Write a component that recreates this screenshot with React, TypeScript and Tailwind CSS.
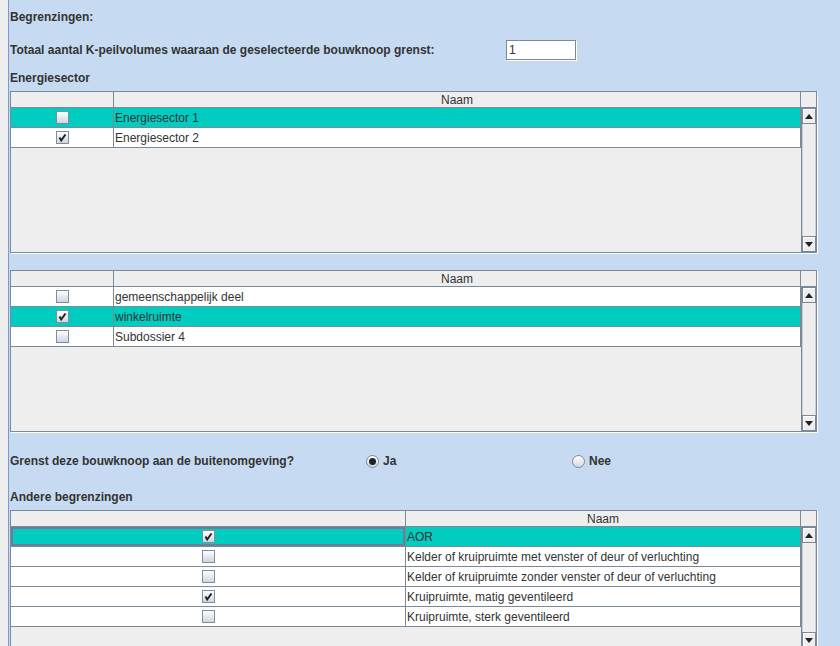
import type { ReactNode } from "react";

type Row = { label: string; checked: boolean; selected?: boolean };

const energie: Row[] = [
  { label: "Energiesector 1", checked: false, selected: true },
  { label: "Energiesector 2", checked: true },
];

const subdossiers: Row[] = [
  { label: "gemeenschappelijk deel", checked: false },
  { label: "winkelruimte", checked: true, selected: true },
  { label: "Subdossier 4", checked: false },
];

const andere: Row[] = [
  { label: "AOR", checked: true, selected: true },
  { label: "Kelder of kruipruimte met venster of deur of verluchting", checked: false },
  { label: "Kelder of kruipruimte zonder venster of deur of verluchting", checked: false },
  { label: "Kruipruimte, matig geventileerd", checked: true },
  { label: "Kruipruimte, sterk geventileerd", checked: false },
];

function CheckBox({ checked }: { checked: boolean }) {
  return (
    <span className="flex h-[13px] w-[13px] items-center justify-center border border-[#7f8d9c] bg-gradient-to-b from-white to-[#cdd6e2]">
      {checked && (
        <svg width="11" height="11" viewBox="0 0 11 11">
          <path d="M2.5 5.5 L4.2 8.5 L8.5 2.5" fill="none" stroke="#222" strokeWidth="2" />
        </svg>
      )}
    </span>
  );
}

function Radio({ checked }: { checked: boolean }) {
  return (
    <span className="flex h-[13px] w-[13px] items-center justify-center rounded-full border border-[#7a8a99] bg-gradient-to-b from-white to-[#d0d9e4]">
      {checked && <span className="h-[7px] w-[7px] rounded-full bg-[#222]" />}
    </span>
  );
}

function Arrow({ up }: { up: boolean }) {
  return (
    <div className="flex h-[16px] items-center justify-center border border-[#7a8a99] bg-[#eeeeee] shadow-[inset_1px_1px_0_white]">
      <svg width="8" height="5" viewBox="0 0 8 5">
        <path d={up ? "M0 5 L4 0 L8 5 Z" : "M0 0 L8 0 L4 5 Z"} fill="#222" />
      </svg>
    </div>
  );
}

function Cell({ className, children }: { className: string; children: ReactNode }) {
  return <div className={`flex h-full items-center ${className}`}>{children}</div>;
}

function Table({
  rows,
  col1,
  col2,
  height,
  focusFirst,
}: {
  rows: Row[];
  col1: string;
  col2: string;
  height: string;
  focusFirst?: boolean;
}) {
  return (
    <div className={`flex w-[807px] flex-col border border-[#7a8a99] bg-[#eeeeee] shadow-[1px_1px_0_white] ${height}`}>
      <div className="flex h-[16px] shrink-0 border-b border-[#7a8a99] bg-[#eeeeee]">
        <div className={`${col1} border-r border-[#7a8a99]`} />
        <div className={`${col2} border-r border-[#7a8a99] pt-px text-center leading-[15px]`}>Naam</div>
        <div className="flex-1" />
      </div>
      <div className="flex min-h-0 flex-1">
        <div className="w-[790px]">
          {rows.map((r, i) => (
            <div
              key={r.label}
              className={`flex h-[20px] border-b border-r border-[#7a8a99] ${r.selected ? "bg-[#00ccc0]" : "bg-white"}`}
            >
              <Cell
                className={`${col1} justify-center border-r border-[#7a8a99] ${
                  focusFirst && i === 0 ? "shadow-[inset_0_0_0_2px_#6a7f98]" : ""
                }`}
              >
                <CheckBox checked={r.checked} />
              </Cell>
              <Cell className="flex-1 pl-px">{r.label}</Cell>
            </div>
          ))}
        </div>
        <div className="flex w-[15px] flex-col border-l border-[#7a8a99]">
          <Arrow up />
          <div className="flex-1 border-x border-[#c8cfd8] bg-[#eeeeee]" />
          <Arrow up={false} />
        </div>
      </div>
    </div>
  );
}

export default function App() {
  return (
    <div className="flex h-[646px] w-[840px] overflow-hidden font-['Liberation_Sans',Arial,sans-serif] text-[12px] text-[#333333]">
      <div className="w-[9px] shrink-0 border-r border-[#7b9bd0] bg-[#eeeeee]" />
      <div className="flex flex-1 flex-col bg-[#c6dbf1] pl-px pt-[10px]">
        <div className="h-[15px] font-bold leading-[15px]">Begrenzingen:</div>

        <div className="mt-[15px] flex h-[20px] items-center">
          <span className="w-[496px] font-bold">Totaal aantal K-peilvolumes waaraan de geselecteerde bouwknoop grenst:</span>
          <div className="flex h-[20px] w-[70px] items-center border border-[#7a8a99] bg-white pl-[2px] shadow-[1px_1px_0_white]">
            1
          </div>
        </div>

        <div className="mt-[11px] h-[15px] font-bold leading-[15px]">Energiesector</div>
        <div className="mt-[5px]">
          <Table rows={energie} col1="w-[103px]" col2="w-[687px]" height="h-[162px]" />
        </div>

        <div className="mt-[17px]">
          <Table rows={subdossiers} col1="w-[103px]" col2="w-[687px]" height="h-[162px]" />
        </div>

        <div className="mt-[20px] flex h-[20px] items-center font-bold">
          <span className="w-[356px]">Grenst deze bouwknoop aan de buitenomgeving?</span>
          <div className="flex w-[206px] items-center gap-[4px]">
            <Radio checked />
            <span>Ja</span>
          </div>
          <div className="flex items-center gap-[4px]">
            <Radio checked={false} />
            <span>Nee</span>
          </div>
        </div>

        <div className="mt-[20px] h-[15px] font-bold leading-[15px]">Andere begrenzingen</div>
        <div className="mt-[5px]">
          <Table rows={andere} col1="w-[395px]" col2="w-[395px]" height="h-[139px]" focusFirst />
        </div>
      </div>
    </div>
  );
}
